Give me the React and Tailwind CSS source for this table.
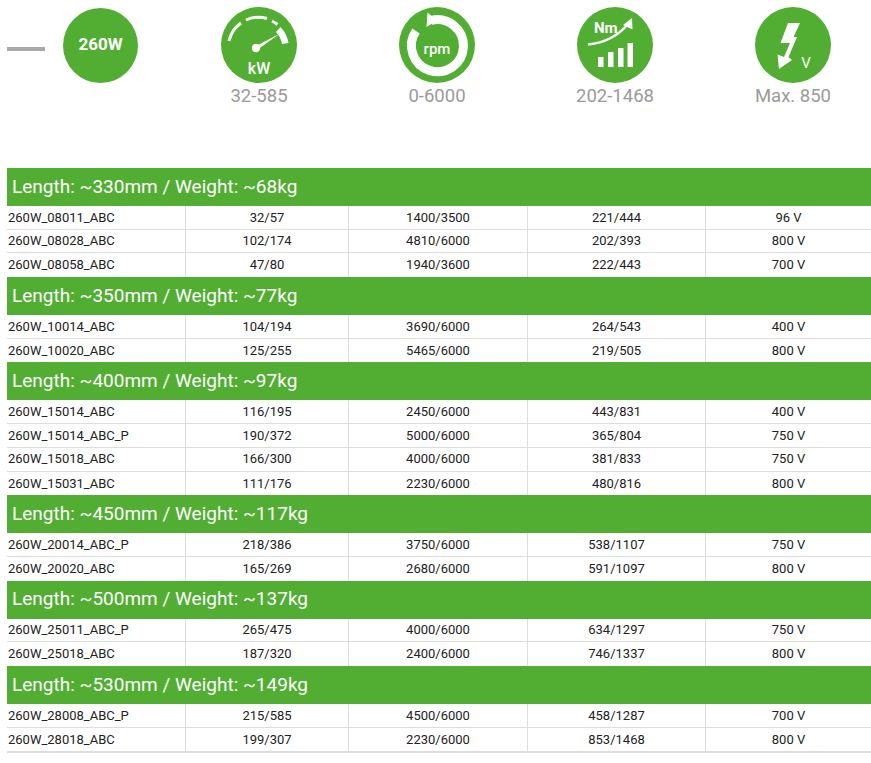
import React from 'react';

const GREEN = '#52ae32';

const groups = [
  {
    title: 'Length: ~330mm / Weight: ~68kg',
    rows: [
      ['260W_08011_ABC', '32/57', '1400/3500', '221/444', '96 V'],
      ['260W_08028_ABC', '102/174', '4810/6000', '202/393', '800 V'],
      ['260W_08058_ABC', '47/80', '1940/3600', '222/443', '700 V'],
    ],
  },
  {
    title: 'Length: ~350mm / Weight: ~77kg',
    rows: [
      ['260W_10014_ABC', '104/194', '3690/6000', '264/543', '400 V'],
      ['260W_10020_ABC', '125/255', '5465/6000', '219/505', '800 V'],
    ],
  },
  {
    title: 'Length: ~400mm / Weight: ~97kg',
    rows: [
      ['260W_15014_ABC', '116/195', '2450/6000', '443/831', '400 V'],
      ['260W_15014_ABC_P', '190/372', '5000/6000', '365/804', '750 V'],
      ['260W_15018_ABC', '166/300', '4000/6000', '381/833', '750 V'],
      ['260W_15031_ABC', '111/176', '2230/6000', '480/816', '800 V'],
    ],
  },
  {
    title: 'Length: ~450mm / Weight: ~117kg',
    rows: [
      ['260W_20014_ABC_P', '218/386', '3750/6000', '538/1107', '750 V'],
      ['260W_20020_ABC', '165/269', '2680/6000', '591/1097', '800 V'],
    ],
  },
  {
    title: 'Length: ~500mm / Weight: ~137kg',
    rows: [
      ['260W_25011_ABC_P', '265/475', '4000/6000', '634/1297', '750 V'],
      ['260W_25018_ABC', '187/320', '2400/6000', '746/1337', '800 V'],
    ],
  },
  {
    title: 'Length: ~530mm / Weight: ~149kg',
    rows: [
      ['260W_28008_ABC_P', '215/585', '4500/6000', '458/1287', '700 V'],
      ['260W_28018_ABC', '199/307', '2230/6000', '853/1468', '800 V'],
    ],
  },
];

function Circle({ children }) {
  return (
    <svg width="76" height="76" viewBox="0 0 76 76">
      <circle cx="38" cy="38" r="38" fill={GREEN} />
      {children}
    </svg>
  );
}

function KwIcon() {
  return (
    <Circle>
      <g fill="none" stroke="#fff" strokeWidth="3">
        <path d="M8 34 A30 30 0 0 1 20 16" />
        <path d="M25 13 A30 30 0 0 1 46 11.5" />
        <path d="M51 14 A30 30 0 0 1 56.5 17.5" />
      </g>
      <path d="M59.5 20 A30 30 0 0 1 67.5 36 L61 37 A24 24 0 0 0 55 25 Z" fill="#fff" />
      <circle cx="35" cy="41" r="4.2" fill="#fff" />
      <path d="M34 39.5 L59 26.5 L36 43 Z" fill="#fff" />
      <text x="38" y="67" textAnchor="middle" fill="#fff" fontSize="16" fontWeight="500" fontFamily="Roboto, sans-serif">kW</text>
    </Circle>
  );
}

function RpmIcon() {
  return (
    <Circle>
      <path d="M17 24 A26 26 0 1 0 32 13.5" fill="none" stroke="#fff" strokeWidth="9" />
      <path d="M28.5 5.5 L38 13.5 L27.5 20 Z" fill="#fff" />
      <text x="38" y="47" textAnchor="middle" fill="#fff" fontSize="15" fontWeight="500" fontFamily="Roboto, sans-serif">rpm</text>
    </Circle>
  );
}

function NmIcon() {
  return (
    <Circle>
      <text x="17" y="26" fill="#fff" fontSize="15" fontWeight="700" fontFamily="Roboto, sans-serif">Nm</text>
      <path d="M11 37.5 Q36 35 51 17" fill="none" stroke="#fff" strokeWidth="2.5" />
      <path d="M55 11 L55.5 22.5 L46 18 Z" fill="#fff" />
      <rect x="21" y="50" width="5.5" height="10" fill="#fff" />
      <rect x="31" y="45" width="5.5" height="15" fill="#fff" />
      <rect x="41" y="41" width="5.5" height="19" fill="#fff" />
      <rect x="50.5" y="36" width="5.5" height="24" fill="#fff" />
    </Circle>
  );
}

function VoltIcon() {
  return (
    <Circle>
      <path d="M33 16 L45 16 L38.5 30 L42 30 L33.5 50 L37 53 L24 62 L22.5 47.5 L29 50 L35 36 L25.5 36 Z" fill="#fff" />
      <text x="51" y="61" textAnchor="middle" fill="#fff" fontSize="15" fontFamily="Roboto, sans-serif">V</text>
    </Circle>
  );
}

const stats = [
  { icon: <KwIcon />, label: '32-585' },
  { icon: <RpmIcon />, label: '0-6000' },
  { icon: <NmIcon />, label: '202-1468' },
  { icon: <VoltIcon />, label: 'Max. 850' },
];

export default function App() {
  return (
    <div className="w-[871px] overflow-hidden bg-white" style={{ fontFamily: 'Roboto, "Liberation Sans", sans-serif' }}>
      {/* spec icons */}
      <div className="flex items-start pt-[7px] pl-[7px] h-[168px]">
        <div className="flex items-center h-[76px]">
          <div className="mt-[8px] w-[38px] h-[4px] bg-[#aaaaaa]" />
          <div className="ml-[18px] w-[75px] h-[75px] rounded-full bg-[#52ae32] flex items-center justify-center text-white font-bold text-[17px]">
            260W
          </div>
        </div>
        <div className="flex ml-[32px]">
          {stats.map((s) => (
            <div key={s.label} className="w-[178px] flex flex-col items-center">
              {s.icon}
              <div className="mt-[2px] text-[18.5px] leading-[22px] text-[#9a9a9a]">{s.label}</div>
            </div>
          ))}
        </div>
      </div>

      {/* table */}
      <div className="ml-[7px] w-[864px] border-b-2 border-[#dddddd]">
        {groups.map((g) => (
          <div key={g.title}>
            <div className="h-[38px] bg-[#52ae32] text-white text-[19px] pl-[5px] flex items-center">
              {g.title}
            </div>
            {g.rows.map((r, i) => (
              <div
                key={r[0]}
                className={`grid grid-cols-[178px_163px_179px_178px_166px] h-[23.7px] text-[13px] text-[#222222] ${i < g.rows.length - 1 ? 'border-b border-[#dddddd]' : ''}`}
              >
                <div className="pl-[1px] flex items-center">{r[0]}</div>
                <div className="border-l border-[#dddddd] flex items-center justify-center">{r[1]}</div>
                <div className="border-l border-[#dddddd] flex items-center justify-center">{r[2]}</div>
                <div className="border-l border-[#dddddd] flex items-center justify-center">{r[3]}</div>
                <div className="border-l border-[#dddddd] flex items-center justify-center">{r[4]}</div>
              </div>
            ))}
          </div>
        ))}
      </div>
    </div>
  );
}
